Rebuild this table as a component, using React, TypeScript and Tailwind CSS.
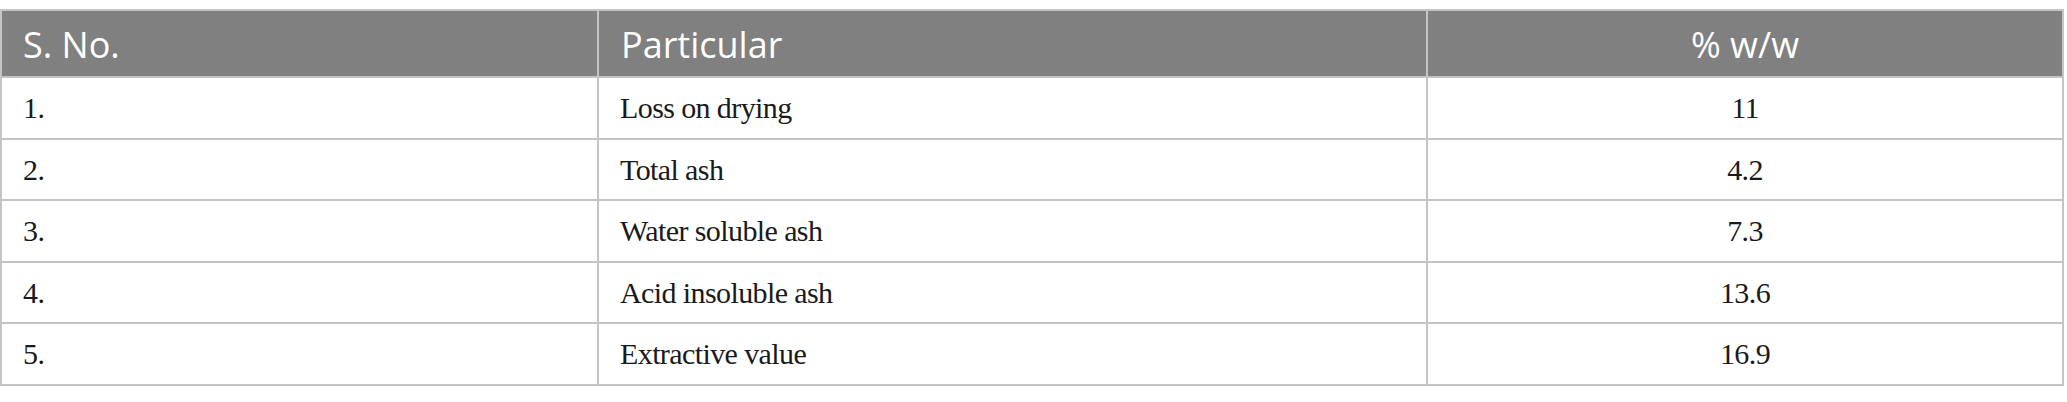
const rows = [
  { no: "1.", particular: "Loss on drying", value: "11" },
  { no: "2.", particular: "Total ash", value: "4.2" },
  { no: "3.", particular: "Water soluble ash", value: "7.3" },
  { no: "4.", particular: "Acid insoluble ash", value: "13.6" },
  { no: "5.", particular: "Extractive value", value: "16.9" },
];

export default function App() {
  return (
    <div className="w-[2067px] h-[402px] bg-white pt-[9px] pr-[3px]">
      <table className="w-full border-collapse border-2 border-[#c4c4c4] table-fixed">
        <colgroup>
          <col className="w-[597px]" />
          <col className="w-[829px]" />
          <col />
        </colgroup>
        <thead>
          <tr className="bg-[#7f807f] h-[67px] text-white text-[36px] font-['Open_Sans',sans-serif]">
            <th className="text-left font-normal pl-[21px] pt-[2px] border-2 border-[#c4c4c4]">S. No.</th>
            <th className="text-left font-normal pl-[22px] pt-[2px] border-2 border-[#c4c4c4]">Particular</th>
            <th className="text-center font-normal pt-[2px] border-2 border-[#c4c4c4]">% w/w</th>
          </tr>
        </thead>
        <tbody className="font-['Liberation_Serif',serif] text-[30px] tracking-[-0.6px] text-[#1a1a1a]">
          {rows.map((r) => (
            <tr key={r.no} className="h-[61.5px]">
              <td className="pl-[21px] border-2 border-[#c4c4c4]">{r.no}</td>
              <td className="pl-[21px] border-2 border-[#c4c4c4]">{r.particular}</td>
              <td className="text-center border-2 border-[#c4c4c4]">{r.value}</td>
            </tr>
          ))}
        </tbody>
      </table>
    </div>
  );
}
